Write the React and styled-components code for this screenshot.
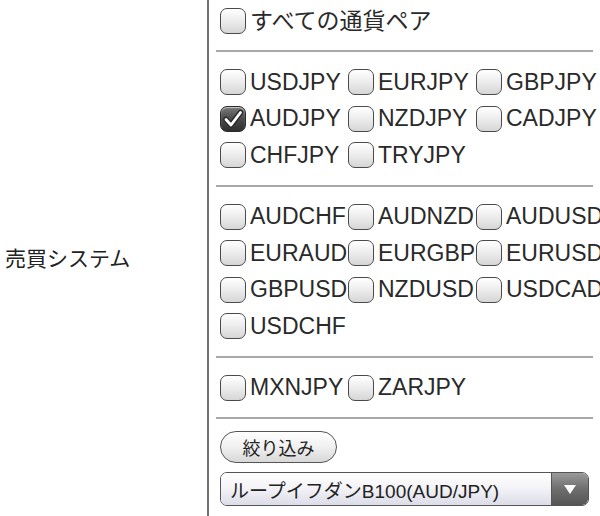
import styled, { createGlobalStyle } from "styled-components";

const GlobalStyle = createGlobalStyle`
    html, body {
        margin: 0;
        padding: 0;
        background: #ffffff;
    }
    body {
        font-family: "Liberation Sans", "Noto Sans CJK JP", sans-serif;
        color: #222222;
        overflow: hidden;
    }
`;

const groups = [
    ["USDJPY", "EURJPY", "GBPJPY", "AUDJPY", "NZDJPY", "CADJPY", "CHFJPY", "TRYJPY"],
    ["AUDCHF", "AUDNZD", "AUDUSD", "EURAUD", "EURGBP", "EURUSD", "GBPUSD", "NZDUSD", "USDCAD", "USDCHF"],
    ["MXNJPY", "ZARJPY"],
];

const checked = ["AUDJPY"];

function Check({ on }) {
    return (
        <Box $checked={on}>
            {on && (
                <svg width="24" height="24" viewBox="0 0 24 24">
                    <path d="M5 12.5 L10 18 L19.5 5.5" fill="none" stroke="#2a2a2a" strokeWidth="5.5" strokeLinecap="round" strokeLinejoin="round" />
                    <path d="M5 12.5 L10 18 L19.5 5.5" fill="none" stroke="#fff" strokeWidth="2.8" strokeLinecap="round" strokeLinejoin="round" />
                </svg>
            )}
        </Box>
    );
}

export default function App() {
    return (
        <>
            <GlobalStyle />
            <Row>
                <LabelCell>売買システム</LabelCell>
                <ValueCell>
                    <AllRow>
                        <Check />
                        <PairLabel>すべての通貨ペア</PairLabel>
                    </AllRow>
                    {groups.map((pairs, i) => (
                        <Section key={i}>
                            <Rule />
                            <PairGrid>
                                {pairs.map((p) => (
                                    <Pair key={p}>
                                        <Check on={checked.includes(p)} />
                                        <PairLabel>{p}</PairLabel>
                                    </Pair>
                                ))}
                            </PairGrid>
                        </Section>
                    ))}
                    <Rule />
                    <Controls>
                        <FilterButton>絞り込み</FilterButton>
                        <Select>
                            <SelectText>ループイフダンB100(AUD/JPY)</SelectText>
                            <SelectArrow>
                                <svg width="14" height="11" viewBox="0 0 14 11">
                                    <path d="M1 1 L13 1 L7 10 Z" fill="#fff" />
                                </svg>
                            </SelectArrow>
                        </Select>
                    </Controls>
                </ValueCell>
            </Row>
        </>
    );
}

const Row = styled.div`
    display: flex;
    width: 600px;
    height: 516px;
    overflow: hidden;
`;

const LabelCell = styled.div`
    width: 207px;
    flex-shrink: 0;
    display: flex;
    align-items: center;
    padding: 0 0 3px 5px;
    box-sizing: border-box;
    font-family: "Noto Sans CJK JP", sans-serif;
    font-size: 21px;
    color: #222;
`;

const ValueCell = styled.div`
    flex: 1;
    border-left: 2px solid #707070;
    padding: 3px 7px 0 7px;
    min-width: 0;
`;

const AllRow = styled.div`
    display: flex;
    align-items: center;
    height: 36px;
    padding-left: 4px;
`;

const Section = styled.div``;

const Rule = styled.div`
    height: 2px;
    margin: 11px 0 12px;
    background: #a8a8a8;
    width: 377px;
`;

const PairGrid = styled.div`
    display: grid;
    grid-template-columns: repeat(3, 128px);
    grid-auto-rows: 36.5px;
    padding-left: 4px;
`;

const Pair = styled.div`
    display: flex;
    align-items: center;
    width: 128px;
    white-space: nowrap;
`;

const Box = styled.span`
    flex-shrink: 0;
    display: inline-flex;
    align-items: center;
    justify-content: center;
    width: 26px;
    height: 26px;
    box-sizing: border-box;
    border: 1.5px solid ${(p) => (p.$checked ? "#2c2c2c" : "#4a4a4a")};
    border-radius: 7px;
    background: ${(p) =>
        p.$checked
            ? "linear-gradient(to bottom, #7a7a7a 0%, #4a4a4a 50%, #2e2e2e 100%)"
            : "linear-gradient(to bottom, #ffffff 0%, #ececec 50%, #d6d6d6 100%)"};
    box-shadow: inset 0 1px 1px rgba(255, 255, 255, 0.6);
    position: relative;
    z-index: 1;
    svg {
        display: block;
    }
`;

const PairLabel = styled.span`
    margin-left: 4px;
    font-size: 23px;
    color: #2a2a2a;
    line-height: 1;
`;

const Controls = styled.div`
    display: flex;
    flex-direction: column;
    align-items: flex-start;
    gap: 9px;
    padding-left: 4px;
    margin-top: 8px;
`;

const FilterButton = styled.button`
    height: 32px;
    width: 117px;
    border: 1.5px solid #555;
    border-radius: 17px;
    background: linear-gradient(to bottom, #ffffff 0%, #f0f0f0 50%, #d8d8d8 100%);
    font-family: "Noto Sans CJK JP", sans-serif;
    font-size: 18px;
    color: #222;
    padding: 0;
    line-height: 1;
`;

const Select = styled.div`
    display: flex;
    width: 369px;
    height: 34px;
    box-sizing: border-box;
    border: 1.5px solid #555;
    border-radius: 7px;
    overflow: hidden;
`;

const SelectText = styled.div`
    flex: 1;
    display: flex;
    align-items: center;
    padding-left: 9px;
    background: linear-gradient(to bottom, #ffffff 0%, #f4f4f8 45%, #dcdce8 100%);
    font-size: 19px;
    color: #222;
    white-space: nowrap;
`;

const SelectArrow = styled.div`
    width: 36px;
    display: flex;
    align-items: center;
    justify-content: center;
    border-left: 1px solid #555;
    background: linear-gradient(to bottom, #9a9a9a 0%, #6e6e6e 50%, #555 100%);
`;
